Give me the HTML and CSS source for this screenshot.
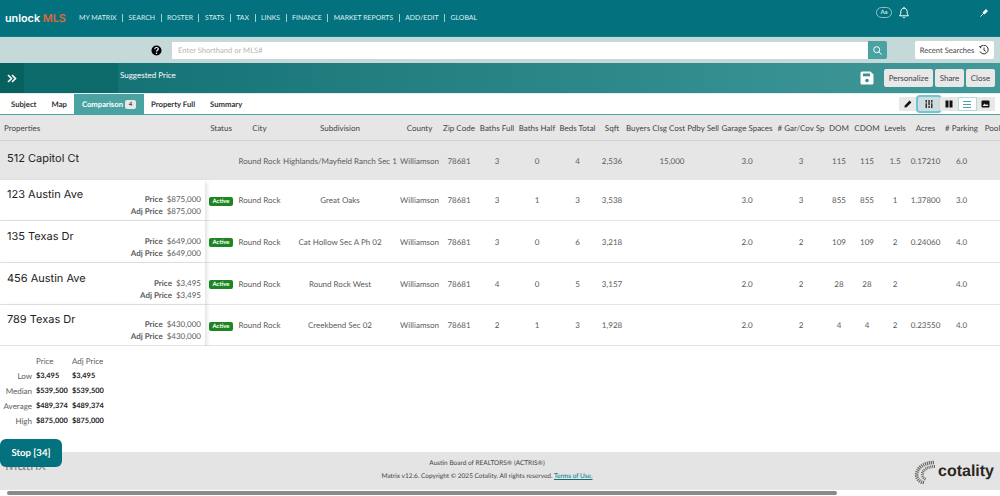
FILE: index.html
```html
<!DOCTYPE html>
<html lang="en">

<head>
    <meta charset="UTF-8">
    <title>Suggested Price - Comparison</title>
    <link rel="stylesheet" href="styles.css">
</head>

<body>
    <div class="top-bar">
        <div class="logo">unlock <span class="logo-mls">MLS</span></div>
        <ul class="main-nav">
            <li>MY MATRIX</li>
            <li>SEARCH</li>
            <li>ROSTER</li>
            <li>STATS</li>
            <li>TAX</li>
            <li>LINKS</li>
            <li>FINANCE</li>
            <li>MARKET REPORTS</li>
            <li>ADD/EDIT</li>
            <li>GLOBAL</li>
        </ul>
        <div class="top-tools">
            <span class="font-pill">Aa</span>
            <svg class="bell" width="12" height="13" viewBox="0 0 12 13" fill="none" stroke="#fff" stroke-width="1">
                <path d="M1.5 9.8c1-1 1.3-2 1.3-4C2.800 3.600 4.200 2.200 6 2.200s3.200 1.400 3.200 3.600c0 2 .3 3 1.300 4z" />
                <path d="M6 .8v1.400M4.800 11.200c.3.700 2.100.700 2.400 0" />
            </svg>
            <svg class="pin" width="10" height="10" viewBox="0 0 10 10" fill="none" stroke="#fff">
                <path d="M1.500 8.500 5 5" stroke-width="1" />
                <path d="M4.500 5.500 8 2" stroke-width="2.800" />
            </svg>
        </div>
    </div>

    <div class="search-bar">
        <svg class="help" width="11" height="11" viewBox="0 0 11 11">
            <circle cx="5.500" cy="5.500" r="5" fill="#000" />
            <path d="M3.800 4.200c0-2.200 3.500-2.200 3.500-.2 0 1.300-1.800 1.200-1.800 2.600" fill="none" stroke="#fff" stroke-width="1.200" />
            <circle cx="5.500" cy="8.300" r=".8" fill="#fff" />
        </svg>
        <div class="search-box">Enter Shorthand or MLS#</div>
        <div class="search-btn">
            <svg width="9" height="9" viewBox="0 0 9 9" fill="none" stroke="#fff" stroke-width="1">
                <circle cx="3.700" cy="3.700" r="3" />
                <path d="M6 6l2.600 2.600" />
            </svg>
        </div>
        <div class="recent-btn">Recent Searches
            <svg width="11" height="10" viewBox="0 0 11 10" fill="none" stroke="#333" stroke-width="1">
                <path d="M2.300 2.200A4.300 4.300 0 1 1 2 6.400" />
                <path d="M.6 1.200 3.400.9 3.100 3.400z" fill="#333" stroke="none" />
                <path d="M6 2.500v2.800l1.800 1" />
            </svg>
        </div>
    </div>

    <div class="title-bar">
        <div class="expand-btn">
            <svg width="10" height="9" viewBox="0 0 10 9" fill="none" stroke="#fff" stroke-width="1.600">
                <path d="M1 1l3.500 3.500L1 8M5 1l3.500 3.500L5 8" />
            </svg>
        </div>
        <div class="title-gap"></div>
        <div class="page-title">Suggested Price</div>
        <svg class="save-icon" width="14" height="14" viewBox="0 0 14 14">
            <path d="M2 .5h8.500L13.500 3.500V12a1.500 1.500 0 0 1-1.500 1.500H2A1.500 1.500 0 0 1 .5 12V2A1.500 1.500 0 0 1 2 .5z" fill="#fff" />
            <rect x="3" y="2.500" width="7" height="2.800" fill="#3a8f8e" />
            <circle cx="7" cy="9.500" r="1.800" fill="#3a8f8e" />
        </svg>
        <button class="title-btn btn-wide">Personalize</button>
        <button class="title-btn">Share</button>
        <button class="title-btn">Close</button>
    </div>

    <div class="tab-bar">
        <div class="tab">Subject</div>
        <div class="tab">Map</div>
        <div class="tab tab-active">Comparison <span class="tab-count">4</span></div>
        <div class="tab">Property Full</div>
        <div class="tab">Summary</div>
        <div class="view-tools">
            <div class="view-btn">
                <svg width="8" height="8" viewBox="0 0 8 8" fill="#111"><path d="M5.600.6 7.400 2.400 2.600 7.200.4 7.600.8 5.400z" /></svg>
            </div>
            <div class="view-btn view-focus">
                <svg width="8" height="8" viewBox="0 0 8 8" fill="#333"><path d="M.5 0h1.500v8H.5zM3.300 0h1.500v8H3.300zM6 0h1.500v8H6z" /><path d="M0 2.500h2.500v.7H0zM5.500 2.500h2.500v.7H5.500zM2.800 5h2.500v.7H2.800z" fill="#cfdcdd" /></svg>
            </div>
            <div class="view-btn">
                <svg width="8" height="8" viewBox="0 0 8 8" fill="#111"><rect x=".5" y=".5" width="3" height="7" /><rect x="4.500" y=".5" width="3" height="7" /></svg>
            </div>
            <div class="view-btn view-on">
                <svg width="8" height="7" viewBox="0 0 8 7" fill="#4aa3a1"><rect width="8" height="1" /><rect y="3" width="8" height="1" /><rect y="6" width="8" height="1" /></svg>
            </div>
            <div class="view-btn">
                <svg width="9" height="8" viewBox="0 0 9 8"><rect x=".5" y=".5" width="8" height="7" rx="1" fill="#111" /><path d="M1.500 6 3.500 3.500 5 5l1-1 1.500 2z" fill="#e8e8e8" /></svg>
            </div>
        </div>
    </div>

    <div class="content">
        <div class="grid-wrap">
            <table class="comp-table">
                <colgroup>
                    <col class="c-prop"><col class="c-status"><col class="c-city"><col class="c-sub"><col class="c-county">
                    <col class="c-zip"><col class="c-baths"><col class="c-baths"><col class="c-beds"><col class="c-sqft">
                    <col class="c-buyers"><col class="c-garage"><col class="c-gar"><col class="c-dom"><col class="c-cdom">
                    <col class="c-levels"><col class="c-acres"><col class="c-parking"><col class="c-pool">
                </colgroup>
                <thead>
                    <tr>
                        <th class="th-prop">Properties</th>
                        <th>Status</th>
                        <th>City</th>
                        <th>Subdivision</th>
                        <th>County</th>
                        <th>Zip Code</th>
                        <th>Baths Full</th>
                        <th>Baths Half</th>
                        <th>Beds Total</th>
                        <th>Sqft</th>
                        <th>Buyers Clsg Cost Pdby Sell</th>
                        <th>Garage Spaces</th>
                        <th># Gar/Cov Sp</th>
                        <th>DOM</th>
                        <th>CDOM</th>
                        <th>Levels</th>
                        <th>Acres</th>
                        <th># Parking</th>
                        <th>Pool</th>
                    </tr>
                </thead>
                <tbody>
                    <tr class="row-subject">
                        <td class="td-subject"><div class="address">512 Capitol Ct</div></td>
                        <td></td>
                        <td>Round Rock</td>
                        <td>Highlands/Mayfield Ranch Sec 1</td>
                        <td>Williamson</td>
                        <td>78681</td>
                        <td>3</td>
                        <td>0</td>
                        <td>4</td>
                        <td>2,536</td>
                        <td>15,000</td>
                        <td>3.0</td>
                        <td>3</td>
                        <td>115</td>
                        <td>115</td>
                        <td>1.5</td>
                        <td>0.17210</td>
                        <td>6.0</td>
                        <td></td>
                    </tr>
                    <tr class="row-comp row-a">
                        <td class="td-prop">
                            <div class="prop-cell">
                                <div class="address">123 Austin Ave</div>
                                <div class="prices">
                                    <div><b>Price</b> $875,000</div>
                                    <div><b>Adj Price</b> $875,000</div>
                                </div>
                            </div>
                        </td>
                        <td><span class="status">Active</span></td>
                        <td>Round Rock</td>
                        <td>Great Oaks</td>
                        <td>Williamson</td>
                        <td>78681</td>
                        <td>3</td>
                        <td>1</td>
                        <td>3</td>
                        <td>3,538</td>
                        <td></td>
                        <td>3.0</td>
                        <td>3</td>
                        <td>855</td>
                        <td>855</td>
                        <td>1</td>
                        <td>1.37800</td>
                        <td>3.0</td>
                        <td></td>
                    </tr>
                    <tr class="row-comp row-b">
                        <td class="td-prop">
                            <div class="prop-cell">
                                <div class="address">135 Texas Dr</div>
                                <div class="prices">
                                    <div><b>Price</b> $649,000</div>
                                    <div><b>Adj Price</b> $649,000</div>
                                </div>
                            </div>
                        </td>
                        <td><span class="status">Active</span></td>
                        <td>Round Rock</td>
                        <td>Cat Hollow Sec A Ph 02</td>
                        <td>Williamson</td>
                        <td>78681</td>
                        <td>3</td>
                        <td>0</td>
                        <td>6</td>
                        <td>3,218</td>
                        <td></td>
                        <td>2.0</td>
                        <td>2</td>
                        <td>109</td>
                        <td>109</td>
                        <td>2</td>
                        <td>0.24060</td>
                        <td>4.0</td>
                        <td></td>
                    </tr>
                    <tr class="row-comp row-b">
                        <td class="td-prop">
                            <div class="prop-cell">
                                <div class="address">456 Austin Ave</div>
                                <div class="prices">
                                    <div><b>Price</b> $3,495</div>
                                    <div><b>Adj Price</b> $3,495</div>
                                </div>
                            </div>
                        </td>
                        <td><span class="status">Active</span></td>
                        <td>Round Rock</td>
                        <td>Round Rock West</td>
                        <td>Williamson</td>
                        <td>78681</td>
                        <td>4</td>
                        <td>0</td>
                        <td>5</td>
                        <td>3,157</td>
                        <td></td>
                        <td>2.0</td>
                        <td>2</td>
                        <td>28</td>
                        <td>28</td>
                        <td>2</td>
                        <td></td>
                        <td>4.0</td>
                        <td></td>
                    </tr>
                    <tr class="row-comp row-a">
                        <td class="td-prop">
                            <div class="prop-cell">
                                <div class="address">789 Texas Dr</div>
                                <div class="prices">
                                    <div><b>Price</b> $430,000</div>
                                    <div><b>Adj Price</b> $430,000</div>
                                </div>
                            </div>
                        </td>
                        <td><span class="status">Active</span></td>
                        <td>Round Rock</td>
                        <td>Creekbend Sec 02</td>
                        <td>Williamson</td>
                        <td>78681</td>
                        <td>2</td>
                        <td>1</td>
                        <td>3</td>
                        <td>1,928</td>
                        <td></td>
                        <td>2.0</td>
                        <td>2</td>
                        <td>4</td>
                        <td>4</td>
                        <td>2</td>
                        <td>0.23550</td>
                        <td>4.0</td>
                        <td></td>
                    </tr>
                </tbody>
            </table>
        </div>

        <div class="stats">
            <span></span><span class="stat-head">Price</span><span class="stat-head">Adj Price</span>
            <span class="stat-label">Low</span><b>$3,495</b><b>$3,495</b>
            <span class="stat-label">Median</span><b>$539,500</b><b>$539,500</b>
            <span class="stat-label">Average</span><b>$489,374</b><b>$489,374</b>
            <span class="stat-label">High</span><b>$875,000</b><b>$875,000</b>
        </div>
    </div>

    <div class="footer">
        <div class="matrix-logo">Matrix</div>
        <div class="footer-text">
            <div>Austin Board of REALTORS® (ACTRIS®)</div>
            <div class="footer-copy">Matrix v12.6. Copyright © 2025 Cotality. All rights reserved. <a href="#">Terms of Use.</a></div>
        </div>
        <div class="cotality">
            <svg width="24" height="24" viewBox="0 0 24 24" fill="none" stroke="#6b6b66">
                <path d="M20 2.500C12 2.500 4.500 6 2.800 13c-1 5 2.500 9.500 8 9.800" stroke-width="3.600" stroke-dasharray="1.200 .8" />
                <path d="M21 6.500c-6 0-11 2-12.500 6.500-.8 3 .7 5.500 3.500 6.300" stroke-width="3" stroke-dasharray="1 .8" />
            </svg>
            <span class="cotality-name">cotality</span>
        </div>
    </div>

    <div class="h-scroll">
        <div class="scroll-thumb"></div>
    </div>

    <button class="stop-btn">Stop [34]</button>
</body>

</html>
```

FILE: styles.css
```css
* {
    margin: 0;
    padding: 0;
    box-sizing: border-box;
}

html,
body {
    height: 100%;
    overflow: hidden;
}

body {
    position: relative;
    display: flex;
    flex-direction: column;
    font-family: "Lato", "Open Sans", sans-serif;
    font-size: 8px;
    color: #5c5c5c;
    background-color: #fff;
    text-rendering: geometricPrecision;
}

/* top bar */
.top-bar {
    height: 37px;
    flex: none;
    display: flex;
    align-items: center;
    background-color: #03727e;
    color: #fff;
    border-bottom: 1px solid #0d7f88;
}

.logo {
    width: 79px;
    padding-left: 5px;
    font-family: "Inter", "Liberation Sans", sans-serif;
    font-size: 10.8px;
    font-weight: 600;
    white-space: nowrap;
}

.logo-mls {
    color: #e0663a;
}

.main-nav {
    display: flex;
    list-style: none;
    font-size: 6.9px;
    color: #dff0f0;
}

.main-nav li {
    padding-right: 5.5px;
    margin-right: 5.5px;
    border-right: 1px solid #9fd0d2;
    line-height: 8px;
}

.main-nav li:last-child {
    border-right: none;
}

.top-tools {
    margin-left: auto;
    display: flex;
    align-items: center;
    height: 100%;
    padding: 0 11px 12px 0;
}

.font-pill {
    width: 16px;
    height: 11px;
    border: 1px solid #8cc2c6;
    border-radius: 6px;
    font-size: 6px;
    line-height: 9px;
    text-align: center;
}

.bell {
    margin-left: 6px;
}

.pin {
    margin: 1px 0 0 69px;
}

/* search bar */
.search-bar {
    height: 26px;
    flex: none;
    display: flex;
    align-items: center;
    background-color: #c5d9d8;
    padding-right: 6px;
}

.help {
    margin-left: 151px;
}

.search-box {
    width: 696px;
    height: 17px;
    margin-left: 10px;
    padding-left: 6px;
    background-color: #fff;
    font-size: 7.6px;
    line-height: 17px;
    color: #b5b5b5;
}

.search-btn {
    width: 19px;
    height: 18px;
    display: flex;
    align-items: center;
    justify-content: center;
    background-color: #4aa3a1;
    border-radius: 0 2px 2px 0;
}

.recent-btn {
    width: 79px;
    height: 18px;
    margin-left: auto;
    display: flex;
    align-items: center;
    justify-content: center;
    gap: 4px;
    background-color: #fff;
    border-radius: 2px;
    font-size: 7.6px;
    color: #444;
    white-space: nowrap;
}

/* title bar */
.title-bar {
    height: 30px;
    flex: none;
    display: flex;
    align-items: center;
    padding-right: 5px;
    color: #fff;
    background: linear-gradient(to right, #0f6e70, #42999a);
}

.expand-btn {
    width: 24px;
    height: 100%;
    display: flex;
    align-items: center;
    justify-content: center;
    background-color: #07615f;
}

.title-gap {
    width: 94px;
    height: 100%;
    background-color: #0d6a6a;
}

.page-title {
    flex: 1;
    padding: 0 0 6px 2px;
    font-size: 8px;
}

.save-icon {
    margin-right: 8px;
}

.title-btn {
    width: 29px;
    height: 18px;
    margin-left: 2px;
    border: none;
    border-radius: 2px;
    background-color: #e8e8e8;
    font-family: inherit;
    font-size: 8px;
    color: #444;
    text-rendering: geometricPrecision;
}

.btn-wide {
    width: 49px;
}

/* tabs */
.tab-bar {
    height: 22px;
    flex: none;
    display: flex;
    align-items: center;
    border-top: 1px solid #e2eeee;
    border-bottom: 1px solid #4aa3a1;
    background-color: #fff;
}

.tab {
    height: 100%;
    display: flex;
    align-items: center;
    gap: 2px;
    padding: 0 7.5px;
    font-size: 7.7px;
    font-weight: 700;
    color: #333;
}

.tab:first-child {
    padding-left: 11px;
}

.tab-active {
    background-color: #4aa3a1;
    color: #fff;
}

.tab-count {
    width: 11px;
    height: 9px;
    border-radius: 2px;
    background-color: #e8e8e8;
    font-size: 6px;
    line-height: 9px;
    text-align: center;
    color: #444;
}

.view-tools {
    margin-left: auto;
    display: flex;
    padding-right: 5px;
}

.view-btn {
    width: 18.500px;
    height: 14px;
    display: flex;
    align-items: center;
    justify-content: center;
    background-color: #e8e8e8;
}

.view-focus {
    width: 22px;
    background-color: #cfdcdd;
    border-radius: 2px;
    box-shadow: 0 0 0 2px #6ec6d6;
}

.view-on {
    background-color: #fff;
    border: 1px solid #b5d8d7;
}

/* comparison grid */
.content {
    flex: 1;
    min-height: 0;
}

.grid-wrap {
    overflow: hidden;
}

.comp-table {
    width: 1005px;
    table-layout: fixed;
    border-spacing: 0;
    font-size: 8px;
    text-align: center;
}

.c-prop { width: 205px; }
.c-status { width: 32px; }
.c-city { width: 45px; }
.c-sub { width: 116px; }
.c-county { width: 43px; }
.c-zip { width: 36px; }
.c-baths { width: 40px; }
.c-beds { width: 41px; }
.c-sqft { width: 28px; }
.c-buyers { width: 92px; }
.c-garage { width: 58px; }
.c-gar { width: 50px; }
.c-dom { width: 26px; }
.c-cdom { width: 30px; }
.c-levels { width: 26px; }
.c-acres { width: 35px; }
.c-parking { width: 37px; }
.c-pool { width: 25px; }

.comp-table th {
    height: 26px;
    background-color: #e6e6e6;
    border-bottom: 1px solid #d2d2d2;
    font-weight: 400;
    color: #444;
    white-space: nowrap;
}

.comp-table .th-prop {
    padding-left: 4px;
    text-align: left;
}

.comp-table td {
    white-space: nowrap;
    vertical-align: middle;
}

.row-subject td {
    height: 39px;
    background-color: #e6e6e6;
}

.row-comp td {
    background-color: #fff;
    border-bottom: 1px solid #e4e4e4;
}

.row-a td {
    height: 41px;
}

.row-b td {
    height: 42px;
}

.comp-table .td-subject {
    padding: 0 0 5px 7px;
    text-align: left;
}

.comp-table .td-prop {
    position: relative;
    box-shadow: 1px 2px 5px rgba(0, 0, 0, 0.16);
}

.prop-cell {
    height: 40px;
    display: flex;
    justify-content: space-between;
    padding: 6px 4px 0 7px;
}

.address {
    font-family: "Inter", "Liberation Sans", sans-serif;
    font-size: 11px;
    line-height: 16px;
    color: #222;
}

.prices {
    padding-top: 7px;
    text-align: right;
    line-height: 12px;
}

.prices b {
    font-weight: 700;
    margin-right: 2px;
}

.status {
    display: inline-block;
    width: 24px;
    height: 9px;
    border-radius: 2px;
    background-color: #1d8521;
    color: #fff;
    font-size: 6px;
    font-weight: 700;
    line-height: 9px;
    text-align: center;
}

/* price stats */
.stats {
    display: grid;
    grid-template-columns: 32px 32px auto;
    grid-auto-rows: 15px;
    column-gap: 4px;
    justify-content: start;
    margin-top: 7px;
    align-items: center;
    font-size: 8px;
}

.stats b {
    font-size: 7.4px;
    font-weight: 700;
    color: #222;
    white-space: nowrap;
}

.stat-label {
    text-align: right;
    white-space: nowrap;
}

/* footer */
.footer {
    height: 38px;
    flex: none;
    display: grid;
    grid-template-columns: 60px 1fr 86px;
    background-color: #e4e4e4;
    font-size: 6.5px;
    color: #444;
}

.matrix-logo {
    padding: 5px 0 0 5px;
    font-family: "Liberation Sans", sans-serif;
    font-size: 15px;
    color: #888;
}

.footer-text {
    padding-top: 8px;
    text-align: center;
}

.footer-copy {
    margin-top: 6px;
}

.footer-copy a {
    color: #03727e;
}

.cotality {
    display: flex;
    align-items: center;
    padding-top: 1px;
}

.cotality-name {
    font-family: "Liberation Sans", sans-serif;
    font-size: 16px;
    font-weight: bold;
    color: #2b2622;
}

/* page scrollbar */
.h-scroll {
    height: 6px;
    flex: none;
    padding: 1px 163px 1px 7px;
    background-color: #fff;
}

.scroll-thumb {
    height: 4px;
    background-color: #8a8a8a;
    border-radius: 2px;
}

/* floats over the footer */
.stop-btn {
    position: absolute;
    left: 0;
    top: 439px;
    width: 62px;
    height: 28px;
    border: none;
    border-radius: 6px;
    background-color: #03727e;
    color: #fff;
    font-family: inherit;
    font-size: 9.6px;
    font-weight: 700;
    text-rendering: geometricPrecision;
}
```
